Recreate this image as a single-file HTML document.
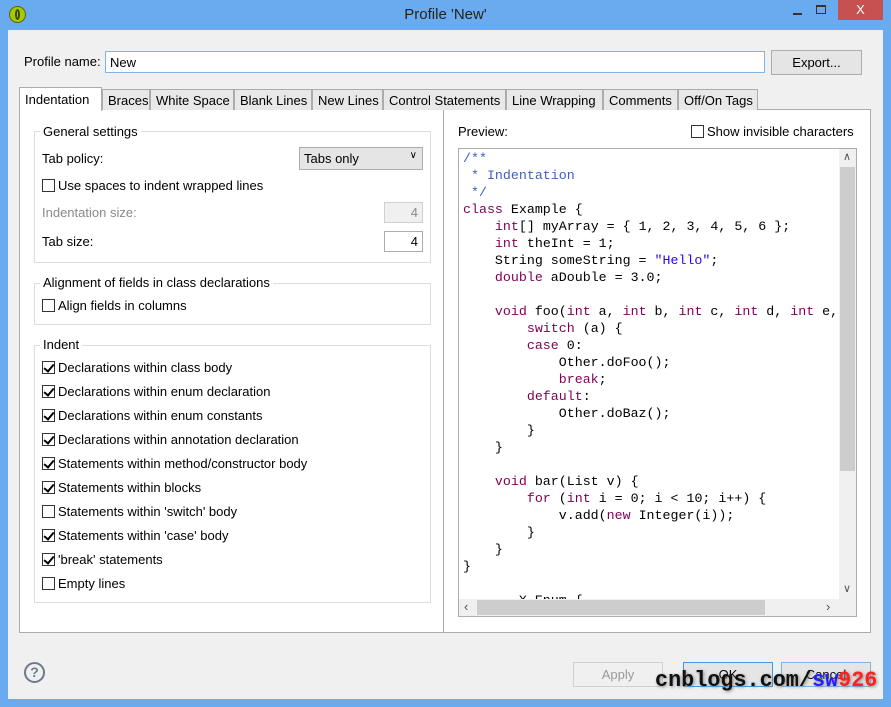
<!DOCTYPE html>
<html><head><meta charset="utf-8"><style>
*{box-sizing:border-box;margin:0;padding:0}
body{width:891px;height:707px;background:#6aabf0;font-family:"Liberation Sans",sans-serif;font-size:13px;color:#000;position:relative;overflow:hidden}
.a{position:absolute}
.client{left:8px;top:30px;width:875px;height:669px;background:#f0f0f0}
.tab{top:89px;height:21px;border:1px solid #acacac;background:#e8e8e8;padding:3px 5px 0;white-space:nowrap;border-bottom:none;overflow:hidden}
.grp{border:1px solid #dcdcdc}
.gt{background:#fff;padding:0 3px;white-space:nowrap}
.cb{width:13px;height:13px;border:1px solid #333;background:#fff}
.cb.c::after{content:"";position:absolute;left:3px;top:0px;width:4px;height:8px;border:solid #000;border-width:0 2px 2px 0;transform:rotate(40deg)}
.lbl{white-space:nowrap}
pre{font-family:"Liberation Mono",monospace;font-size:13.3px;line-height:17px;color:#000}
.k{color:#7f0055}.cm{color:#3f5fbf}.s{color:#2a00ff}
.btn{height:25px;border:1px solid #acacac;background:#e5e5e5;text-align:center;line-height:23px}
</style></head><body>
<div class="a" style="left:9px;top:6px;width:17px;height:17px;border-radius:50%;background:#a8c800;border:1px solid #5a6a00"></div>
<div class="a" style="left:15px;top:9px;width:5px;height:11px;border-radius:50%;border:2px solid #3a4a00"></div>
<div class="a" style="left:0;top:6px;width:891px;text-align:center;font-size:15px;color:#222">Profile 'New'</div>
<div class="a" style="left:793px;top:13px;width:9px;height:2px;background:#333"></div>
<div class="a" style="left:816px;top:5px;width:10px;height:9px;border:1px solid #333;border-top-width:2px"></div>
<div class="a" style="left:838px;top:0;width:45px;height:20px;background:#c75050;color:#fff;text-align:center;font-size:13px;line-height:20px">X</div>
<div class="a client"></div>
<div class="a lbl" style="left:24px;top:54px">Profile name:</div>
<div class="a" style="left:105px;top:51px;width:660px;height:22px;background:#fff;border:1px solid #7eb4ea;padding:3px 4px">New</div>
<div class="a btn" style="left:771px;top:50px;width:91px">Export...</div>
<div class="a" style="left:19px;top:109px;width:852px;height:524px;background:#fff;border:1px solid #acacac"></div>
<div class="a" style="left:443px;top:110px;width:1px;height:522px;background:#acacac"></div>
<div class="a tab" style="left:19px;top:87px;height:24px;background:#fff;width:83px;padding-top:4px">Indentation</div>
<div class="a tab" style="left:102px;width:48px">Braces</div>
<div class="a tab" style="left:150px;width:84px">White Space</div>
<div class="a tab" style="left:234px;width:78px">Blank Lines</div>
<div class="a tab" style="left:312px;width:71px">New Lines</div>
<div class="a tab" style="left:383px;width:123px">Control Statements</div>
<div class="a tab" style="left:506px;width:97px">Line Wrapping</div>
<div class="a tab" style="left:603px;width:75px">Comments</div>
<div class="a tab" style="left:678px;width:80px">Off/On Tags</div>
<div class="a grp" style="left:34px;top:131px;width:397px;height:132px"></div>
<div class="a gt" style="left:40px;top:124px">General settings</div>
<div class="a lbl" style="left:42px;top:151px">Tab policy:</div>
<div class="a" style="left:299px;top:147px;width:124px;height:23px;border:1px solid #acacac;background:#e5e5e5;padding:3px 4px">Tabs only<span style="position:absolute;right:5px;top:2px;font-size:10px">&#8744;</span></div>
<div class="a cb" style="left:42px;top:179px"></div>
<div class="a lbl" style="left:58px;top:178px">Use spaces to indent wrapped lines</div>
<div class="a lbl" style="left:42px;top:205px;color:#8a8a8a">Indentation size:</div>
<div class="a" style="left:384px;top:202px;width:39px;height:21px;border:1px solid #d0d0d0;background:#f0f0f0;text-align:right;padding:2px 4px;color:#8a8a8a">4</div>
<div class="a lbl" style="left:42px;top:234px">Tab size:</div>
<div class="a" style="left:384px;top:231px;width:39px;height:21px;border:1px solid #acacac;background:#fff;text-align:right;padding:2px 4px">4</div>
<div class="a grp" style="left:34px;top:283px;width:397px;height:42px"></div>
<div class="a gt" style="left:40px;top:275px">Alignment of fields in class declarations</div>
<div class="a cb" style="left:42px;top:299px"></div>
<div class="a lbl" style="left:58px;top:298px">Align fields in columns</div>
<div class="a grp" style="left:34px;top:345px;width:397px;height:258px"></div>
<div class="a gt" style="left:40px;top:337px">Indent</div>
<div class="a cb c" style="left:42px;top:361px"></div><div class="a lbl" style="left:58px;top:360px">Declarations within class body</div>
<div class="a cb c" style="left:42px;top:385px"></div><div class="a lbl" style="left:58px;top:384px">Declarations within enum declaration</div>
<div class="a cb c" style="left:42px;top:409px"></div><div class="a lbl" style="left:58px;top:408px">Declarations within enum constants</div>
<div class="a cb c" style="left:42px;top:433px"></div><div class="a lbl" style="left:58px;top:432px">Declarations within annotation declaration</div>
<div class="a cb c" style="left:42px;top:457px"></div><div class="a lbl" style="left:58px;top:456px">Statements within method/constructor body</div>
<div class="a cb c" style="left:42px;top:481px"></div><div class="a lbl" style="left:58px;top:480px">Statements within blocks</div>
<div class="a cb" style="left:42px;top:505px"></div><div class="a lbl" style="left:58px;top:504px">Statements within 'switch' body</div>
<div class="a cb c" style="left:42px;top:529px"></div><div class="a lbl" style="left:58px;top:528px">Statements within 'case' body</div>
<div class="a cb c" style="left:42px;top:553px"></div><div class="a lbl" style="left:58px;top:552px">'break' statements</div>
<div class="a cb" style="left:42px;top:577px"></div><div class="a lbl" style="left:58px;top:576px">Empty lines</div>
<div class="a lbl" style="left:458px;top:124px">Preview:</div>
<div class="a cb" style="left:691px;top:125px"></div>
<div class="a lbl" style="left:707px;top:124px">Show invisible characters</div>
<div class="a" style="left:458px;top:148px;width:399px;height:469px;border:1px solid #acacac;background:#fff;overflow:hidden">
<pre class="a" style="left:4px;top:1px">
<span class="cm">/**
 * Indentation
 */</span>
<span class="k">class</span> Example {
    <span class="k">int</span>[] myArray = { 1, 2, 3, 4, 5, 6 };
    <span class="k">int</span> theInt = 1;
    String someString = <span class="s">"Hello"</span>;
    <span class="k">double</span> aDouble = 3.0;

    <span class="k">void</span> foo(<span class="k">int</span> a, <span class="k">int</span> b, <span class="k">int</span> c, <span class="k">int</span> d, <span class="k">int</span> e,
        <span class="k">switch</span> (a) {
        <span class="k">case</span> 0:
            Other.doFoo();
            <span class="k">break</span>;
        <span class="k">default</span>:
            Other.doBaz();
        }
    }

    <span class="k">void</span> bar(List v) {
        <span class="k">for</span> (<span class="k">int</span> i = 0; i &lt; 10; i++) {
            v.add(<span class="k">new</span> Integer(i));
        }
    }
}

    ...X Enum {</pre>
<div class="a" style="left:380px;top:0;width:17px;height:450px;background:#f0f0f0"></div>
<div class="a" style="left:381px;top:18px;width:15px;height:304px;background:#cdcdcd"></div>
<div class="a" style="left:384px;top:1px;font-size:11px;color:#555">&#8743;</div>
<div class="a" style="left:384px;top:433px;font-size:11px;color:#555">&#8744;</div>
<div class="a" style="left:0;top:450px;width:397px;height:17px;background:#f0f0f0"></div>
<div class="a" style="left:18px;top:451px;width:288px;height:15px;background:#cdcdcd"></div>
<div class="a" style="left:5px;top:450px;font-size:13px;color:#555">&#8249;</div>
<div class="a" style="left:367px;top:450px;font-size:13px;color:#555">&#8250;</div>
</div>
<div class="a" style="left:24px;top:662px;width:21px;height:21px;border-radius:50%;border:2px solid #6a7a90;color:#6a7a90;text-align:center;font-weight:bold;font-size:14px;line-height:17px">?</div>
<div class="a btn" style="left:573px;top:662px;width:90px;color:#999;background:#f0f0f0;border-color:#d0d0d0">Apply</div>
<div class="a btn" style="left:683px;top:662px;width:90px;border-color:#3c9ae8">OK</div>
<div class="a btn" style="left:781px;top:662px;width:90px;border-color:#7eb4ea">Cancel</div>
<div class="a" style="left:655px;top:668px;font-family:'Liberation Mono',monospace;font-size:21.8px;font-weight:bold;color:#111;text-shadow:1px 1px 3px #888;white-space:nowrap">cnblogs.com/<span style="color:#2020ff">sw</span><span style="color:#ff2020">926</span></div>
</body></html>
